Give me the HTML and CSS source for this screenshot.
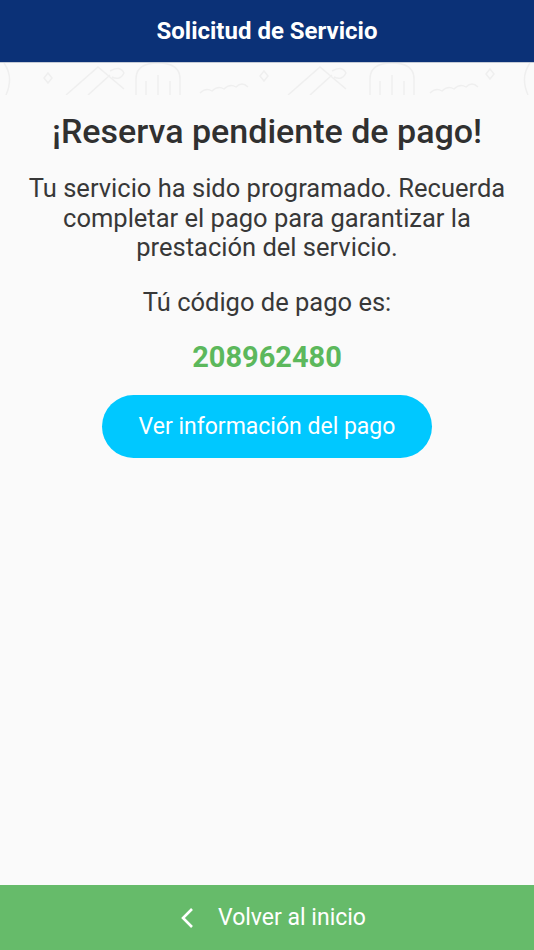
FILE: index.html
```html
<!DOCTYPE html>
<html>
<head>
    <title>Solicitud de Servicio</title>
    <link rel="stylesheet" href="styles.css">
</head>
<body>
    <div class="app">
        <header class="topbar">Solicitud de Servicio</header>
        <div class="pattern">
            <svg width="534" height="32" viewBox="0 0 534 32">
                <g fill="none" stroke="#efefef" stroke-width="1.5">
                    <path d="M4 0 Q14 14 6 32"/>
                    <path d="M48 10 l4 5 l-4 5 l-4 -5 z"/>
                    <path d="M66 32 L98 4 L124 26 M88 32 L110 12"/>
                    <path d="M110 8 q10 -6 14 2 q-4 8 -12 4"/>
                    <path d="M136 32 V16 q0 -16 22 -16 q22 0 22 16 V32 M146 32 V18 M158 32 V12 M170 32 V18"/>
                    <path d="M200 30 q6 -6 12 -2 q6 -6 12 -2 q6 -6 12 -2 q6 -6 12 0"/>
                    <path d="M264 8 l4 5 l-4 5 l-4 -5 z"/>
                    <path d="M288 32 L320 4 L346 26 M310 32 L332 12"/>
                    <path d="M332 8 q10 -6 14 2 q-4 8 -12 4"/>
                    <path d="M370 32 V16 q0 -16 22 -16 q22 0 22 16 V32 M380 32 V18 M392 32 V12 M404 32 V18"/>
                    <path d="M430 30 q6 -6 12 -2 q6 -6 12 -2 q6 -6 12 -2 q6 -6 12 0"/>
                    <path d="M490 6 l4 5 l-4 5 l-4 -5 z"/>
                    <path d="M530 0 Q520 14 528 32"/>
                </g>
            </svg>
        </div>

        <main class="content">
            <h1 class="title">¡Reserva pendiente de pago!</h1>
            <p class="message">Tu servicio ha sido programado. Recuerda completar el pago para garantizar la prestación del servicio.</p>
            <p class="code-label">Tú código de pago es:</p>
            <p class="code">208962480</p>
            <button class="pay-button">Ver información del pago</button>
        </main>

        <footer class="footer">
            <svg class="chevron" width="14" height="22" viewBox="0 0 14 22">
                <path d="M12 2 L3 11 L12 20" fill="none" stroke="#ffffff" stroke-width="2.6"/>
            </svg>
            <span>Volver al inicio</span>
        </footer>
    </div>
</body>
</html>
```

FILE: styles.css
```css
body {
    margin: 0;
    font-family: Roboto, "Noto Sans", Arial, sans-serif;
    background-color: #fafafa;
}
.app {
    display: flex;
    flex-direction: column;
    height: 950px;
}
.topbar {
    height: 63px;
    background-color: #0b3177;
    color: #ffffff;
    font-size: 24px;
    font-weight: 700;
    display: flex;
    align-items: center;
    justify-content: center;
    border-bottom: 1px solid #c5cbd6;
    box-sizing: border-box;
}
.pattern {
    height: 32px;
    overflow: hidden;
    margin-bottom: -32px;
}
.pattern svg {
    display: block;
}
.content {
    flex: 1;
    display: flex;
    flex-direction: column;
    align-items: center;
    padding: 48px 20px 0;
    text-align: center;
    color: #383838;
}
.title {
    margin: 0;
    font-size: 34px;
    font-weight: 500;
    line-height: 40px;
    color: #303030;
}
.message {
    margin: 23px 0 0;
    font-size: 25.5px;
    line-height: 29.5px;
}
.code-label {
    margin: 25.5px 0 0;
    font-size: 25.5px;
    line-height: 29.5px;
}
.code {
    margin: 22px 0 0;
    font-size: 29px;
    font-weight: 700;
    line-height: 34px;
    color: #5cb85c;
}
.pay-button {
    margin-top: 21px;
    width: 330px;
    height: 63px;
    border: none;
    border-radius: 32px;
    background-color: #00c8ff;
    color: #ffffff;
    font-family: Roboto, "Noto Sans", Arial, sans-serif;
    font-size: 23px;
    cursor: pointer;
}
.footer {
    height: 65px;
    background-color: #66bb6a;
    color: #ffffff;
    font-size: 23px;
    display: flex;
    align-items: center;
    justify-content: center;
    gap: 24px;
    padding-left: 12px;
}
.chevron {
    display: block;
}
```
